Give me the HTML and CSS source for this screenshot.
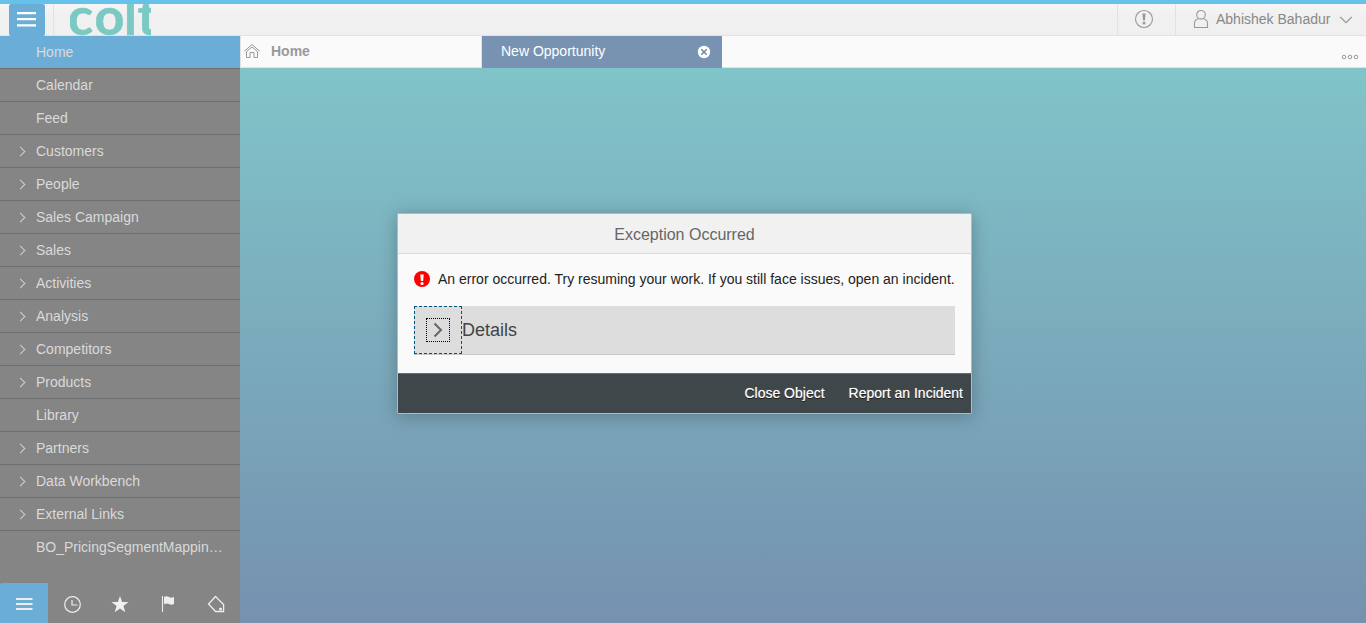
FILE: index.html
```html
<!DOCTYPE html>
<html lang="en">
<head>
<meta charset="utf-8">
<title>New Opportunity</title>
<link rel="stylesheet" href="styles.css">
</head>
<body>
<div class="app">
  <header class="topbar">
    <button class="menu-btn" aria-label="Menu">
      <svg width="36" height="32" viewBox="0 0 36 32"><path d="M8 9.200h19M8 15.200h19M8 21.300h19" stroke="#fff" stroke-width="2.200"/></svg>
    </button>
    <div class="brand">
      <svg width="81" height="32" viewBox="0 0 81 32"><text class="logo-text" y="31.300" x="-2 24.500 54 67.500">colt</text></svg>
    </div>
    <div class="top-alert">
      <svg width="20" height="20" viewBox="0 0 20 20"><circle cx="10" cy="10" r="8.500" fill="none" stroke="#999" stroke-width="1.100"/><path d="M8.400 4.500h3.200l-.7 7H9.100z" fill="#999"/><circle cx="10" cy="14" r="1.500" fill="#999"/></svg>
    </div>
    <div class="top-user">
      <svg class="user-icon" width="16" height="20" viewBox="0 0 16 20" fill="none" stroke="#999" stroke-width="1.100"><circle cx="8" cy="5.800" r="4.300"/><path d="M5.500 9.800C3 10.300 1.500 12 1.500 14.500V18.500h13V14.500c0-2.500-1.500-4.200-4-4.700"/></svg>
      <span>Abhishek Bahadur</span>
      <svg class="caret" width="14" height="8" viewBox="0 0 14 8"><path d="M1.200 1l5.800 5.700L12.800 1" fill="none" stroke="#999" stroke-width="1.200"/></svg>
    </div>
  </header>
  <div class="body">
    <aside class="side">
      <nav class="nav">
        <a class="item active">Home</a>
        <a class="item">Calendar</a>
        <a class="item">Feed</a>
        <a class="item parent">Customers</a>
        <a class="item parent">People</a>
        <a class="item parent">Sales Campaign</a>
        <a class="item parent">Sales</a>
        <a class="item parent">Activities</a>
        <a class="item parent">Analysis</a>
        <a class="item parent">Competitors</a>
        <a class="item parent">Products</a>
        <a class="item">Library</a>
        <a class="item parent">Partners</a>
        <a class="item parent">Data Workbench</a>
        <a class="item parent">External Links</a>
        <a class="item last">BO_PricingSegmentMappin…</a>
      </nav>
      <div class="tools">
        <div class="tool on"><svg width="20" height="20" viewBox="0 0 20 20"><path d="M2 4h16.500M2 9h16.500M2 14h16.500" stroke="#eee" stroke-width="2"/></svg></div>
        <div class="tool"><svg width="20" height="20" viewBox="0 0 20 20" fill="none" stroke="#eee" stroke-width="1.200"><circle cx="10.500" cy="9.500" r="7.800"/><path d="M10 5v5h5.500"/></svg></div>
        <div class="tool"><svg width="20" height="20" viewBox="0 0 20 20"><path d="M10 1l2.100 6h6.400l-5.100 3.900 1.900 6.400L10 13.500l-5.300 3.800 1.900-6.400L1.500 7h6.400z" fill="#f0f0f0"/></svg></div>
        <div class="tool"><svg width="20" height="20" viewBox="0 0 20 20"><path d="M4.500 1v16" stroke="#eee" stroke-width="1.100"/><path d="M6 2c2-1.200 3.600-1 5 .1 1.300.9 3 .7 5 0v7c-2 .9-3.600.8-5 0-1.400-.8-3-.8-5 .2z" fill="#eee"/></svg></div>
        <div class="tool"><svg width="20" height="20" viewBox="0 0 20 20"><path d="M9.500 1.500L2.500 9l7.100 7.500h8V9.500z" fill="none" stroke="#eee" stroke-width="1.300"/><circle cx="14.500" cy="14" r="1.500" fill="#eee"/></svg></div>
      </div>
    </aside>
    <section class="main">
      <div class="tabs">
        <div class="tab home">
          <svg width="18" height="16" viewBox="0 0 18 16" fill="none" stroke="#999" stroke-width="1"><path d="M.5 8l7.500-6.500L15.500 8M2.500 8.500v6h3.500v-5h4v5H13.500V8.500M2.500 8.500L8 4l5.500 4.500"/></svg>
          <span>Home</span>
        </div>
        <div class="tab current">
          <span>New Opportunity</span>
          <svg width="14" height="14" viewBox="0 0 14 14"><circle cx="7" cy="7" r="6.200" fill="#fff"/><path d="M4.300 4.300l5.400 5.400M9.700 4.300l-5.400 5.400" stroke="#6d87a8" stroke-width="1.500"/></svg>
        </div>
        <div class="more">
          <svg width="18" height="6" viewBox="0 0 18 6" fill="none" stroke="#999" stroke-width="1"><circle cx="3" cy="3" r="1.800"/><circle cx="9" cy="3" r="1.800"/><circle cx="15" cy="3" r="1.800"/></svg>
        </div>
      </div>
      <div class="canvas"></div>
    </section>
  </div>
</div>
<div class="dialog" role="dialog">
  <h1 class="dialog-title">Exception Occurred</h1>
  <div class="dialog-body">
    <div class="message">
      <svg width="16" height="16" viewBox="0 0 16 16"><circle cx="8" cy="8" r="8" fill="#f00"/><path d="M6.300 3.500h3.400l-.5 6.500H6.800z" fill="#fff"/><circle cx="8" cy="12.500" r="1.600" fill="#fff"/></svg>
      <span>An error occurred. Try resuming your work. If you still face issues, open an incident.</span>
    </div>
    <div class="details">
      <div class="expander"><div class="expander-icon">
        <svg width="12" height="16" viewBox="0 0 12 16"><path d="M2.500 1.500L9 8l-6.500 6.500" fill="none" stroke="#666" stroke-width="2"/></svg>
      </div></div>
      <span>Details</span>
    </div>
  </div>
  <div class="dialog-foot"><span>Close Object</span><span>Report an Incident</span></div>
</div>
</body>
</html>
```
FILE: styles.css
```css
*, *::before { box-sizing: border-box; }
body {
  margin: 0;
  font: 14px/16px "Liberation Sans", Arial, sans-serif;
  overflow: hidden;
}
svg { display: block; flex: none; }
.app { height: 623px; display: flex; flex-direction: column; }

.topbar {
  height: 36px;
  border-top: 4px solid #66c2ea;
  background: linear-gradient(#f5f5f5, #f0f0f0 40%);
  box-shadow: inset 0 -1px #e2e2e2;
  display: flex;
  flex: none;
}
.menu-btn {
  width: 36px;
  height: 32px;
  margin-left: 9px;
  padding: 0;
  border: 0;
  border-radius: 2px;
  background: #6aaed8;
}
.brand {
  margin-left: 8px;
  padding-left: 16px;
  border-left: 1px solid #e2e2e2;
}
.logo-text {
  font: 700 52px Lato, sans-serif;
  fill: #7ac9c2;
  stroke: #7ac9c2;
  stroke-width: .6px;
}
.top-alert {
  margin-left: auto;
  width: 58px;
  padding: 5px 0 0 16px;
  border-left: 1px solid #e2e2e2;
}
.top-user {
  width: 191px;
  height: 31px;
  padding-left: 17px;
  border-left: 1px solid #e2e2e2;
  display: flex;
  align-items: center;
  color: #888;
}
.top-user span { margin-top: -1px; }
.user-icon { margin: -2px 7px 0 0; }
.caret { margin: 1px 0 0 9px; }

.body { flex: 1; display: flex; min-height: 0; }
.side {
  width: 240px;
  background: #858585;
  display: flex;
  flex-direction: column;
  justify-content: space-between;
}
.item {
  display: flex;
  align-items: center;
  height: 33px;
  padding-left: 36px;
  border-bottom: 1px solid #6e6e6e;
  color: #dadada;
}
.item.active { background: #6aaed8; }
.item.last { border-bottom-color: transparent; }
.item.parent { padding-left: 17px; }
.item.parent::before {
  content: "";
  width: 7px;
  height: 7px;
  margin: 1px 12px 0 0;
  border: solid #d0d0d0;
  border-width: 1px 1px 0 0;
  transform: rotate(45deg);
}
.tools { display: flex; height: 40px; }
.tool {
  width: 48px;
  display: flex;
  align-items: center;
  justify-content: center;
  padding-top: 4px;
}
.tool.on { background: #6aaed8; border-radius: 2px 0 0 0; }

.main { flex: 1; display: flex; flex-direction: column; }
.tabs {
  height: 32px;
  background: #fafafa;
  box-shadow: inset 0 -1px #e2e2e2;
  display: flex;
}
.tab { display: flex; }
.home {
  width: 242px;
  padding: 7px 0 0 3px;
  border: solid #e2e2e2;
  border-width: 0 1px;
  color: #999;
  font-weight: bold;
}
.home svg { margin-right: 9px; }
.current {
  width: 240px;
  padding: 7px 11px 0 19px;
  justify-content: space-between;
  background: #7893b1;
  color: #fff;
}
.current svg { margin-top: 2px; }
.more { margin-left: auto; padding: 18px 7px 0 0; }
.canvas { flex: 1; background: linear-gradient(#80c4c9, #7591af); }

.dialog {
  position: absolute;
  left: 397px;
  top: 213px;
  width: 575px;
  height: 201px;
  border: 1px solid #b8b8b8;
  border-radius: 2px;
  box-shadow: 0 2px 18px rgba(0, 0, 0, .25);
  display: flex;
  flex-direction: column;
  background: #fafafa;
}
.dialog-title {
  margin: 0;
  height: 40px;
  font-size: 16px;
  font-weight: normal;
  line-height: 41px;
  text-align: center;
  color: #666;
  background: #f1f1f1;
  border-bottom: 1px solid #dcdcdc;
}
.dialog-body { flex: 1; padding: 17px 16px 0; }
.message { display: flex; gap: 8px; color: #222; white-space: nowrap; }
.details {
  margin-top: 19px;
  height: 49px;
  background: #ddd;
  border-bottom: 1px solid #c8c8c8;
  display: flex;
  align-items: center;
  font-size: 18px;
  color: #444;
}
.expander {
  width: 48px;
  height: 48px;
  border: 1px dashed #005483;
  display: flex;
  align-items: center;
  justify-content: center;
}
.expander-icon {
  width: 24px;
  height: 24px;
  border: 1px dotted #000;
  display: flex;
  align-items: center;
  justify-content: center;
}
.dialog-foot {
  height: 40px;
  padding: 0 8px 2px 0;
  border-top: 1px solid #5d6f7b;
  background: #3f474a;
  display: flex;
  align-items: center;
  justify-content: flex-end;
  gap: 24px;
  color: #fff;
  text-shadow: 0 0 1px rgba(255, 255, 255, .5), 0 1px #111;
}
```
